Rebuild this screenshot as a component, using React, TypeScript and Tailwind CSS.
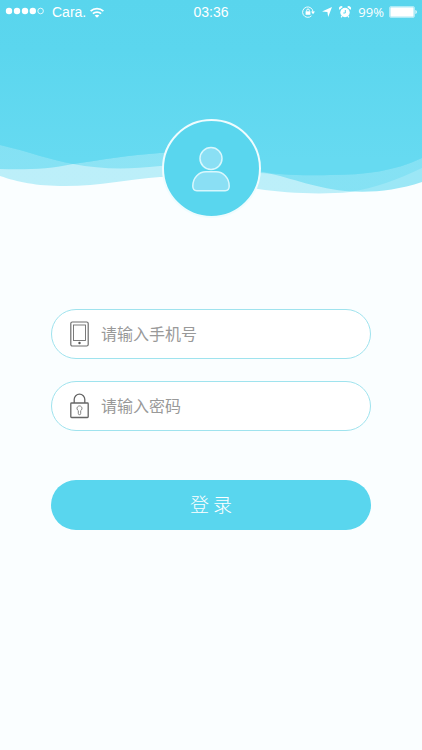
import type { ReactNode } from 'react'

interface FieldProps {
  id: string
  label: string
  type: string
  icon: ReactNode
}

const StatusBar = () => (
  <div className="relative grid h-6 grid-cols-3 items-center px-[5px] font-['Liberation_Sans',Arial,sans-serif] text-sm text-white">
    <div className="flex items-center gap-2">
      <svg viewBox="0 0 39 10" className="h-2.5 w-[39px]" fill="currentColor">
        <circle cx="4" cy="4" r="3.200" />
        <circle cx="12" cy="4" r="3.200" />
        <circle cx="20" cy="4" r="3.200" />
        <circle cx="27.800" cy="4" r="3.200" />
        <circle cx="35.600" cy="4" r="2.800" fill="none" stroke="currentColor" strokeWidth="0.800" />
      </svg>
      <span>Cara.</span>
      <svg viewBox="0 0 14 11" className="-ml-1 h-[11px] w-3.5" fill="none" stroke="currentColor" strokeWidth="1.800">
        <path d="M.6 4.200C4.200.7 9.800.7 13.400 4.200" />
        <path d="M2.900 6.700c2.300-2.200 5.900-2.200 8.200 0" />
        <path d="M7 10.800 4.700 8.600c1.300-1.200 3.300-1.200 4.600 0z" fill="currentColor" stroke="none" />
      </svg>
    </div>

    <span className="text-center">03:36</span>

    <div className="flex items-center justify-end gap-[7px]">
      {/* Rotation lock */}
      <svg viewBox="0 0 13 12" className="h-3 w-[13px]" fill="none" stroke="currentColor">
        <path d="M9.500 9.800A5.200 5.200 0 1 1 11 6" strokeWidth="0.900" />
        <path d="M9 5.600h4L11 8.200z" fill="currentColor" stroke="none" />
        <rect x="3.600" y="5.300" width="4.800" height="3.500" fill="currentColor" stroke="none" />
        <path d="M4.700 5.500V4.300a1.300 1.300 0 0 1 2.600 0v1.200" strokeWidth="1" />
      </svg>
      {/* Location */}
      <svg viewBox="0 0 10 10" className="size-2.5" fill="currentColor">
        <path d="M10 0 6.200 10 5.400 5 0 4.400z" />
      </svg>
      {/* Alarm */}
      <svg viewBox="0 0 12 12" className="size-3" fill="currentColor">
        <circle cx="6" cy="6.500" r="4.700" />
        <path d="M.5 3.800A2 2 0 0 1 3.800 1zM11.500 3.800A2 2 0 0 0 8.200 1z" />
        <path d="m3 10-.8 1.400M9 10l.8 1.400" stroke="currentColor" strokeWidth="1.200" />
        <path d="M6.300 4v3H4.300" fill="none" stroke="#5ad6ed" strokeWidth="1" />
      </svg>
      <span className="font-['Open_Sans',sans-serif] text-[13px]">99%</span>
      {/* Battery */}
      <svg viewBox="0 0 28 12" className="-ml-0.5 h-3 w-7" fill="currentColor">
        <rect x="0.500" y="0.500" width="25" height="11" rx="1.500" fill="none" stroke="currentColor" strokeOpacity="0.500" />
        <rect x="1.300" y="1.300" width="23.400" height="9.400" rx="0.500" />
        <path d="M26.500 4c1.600.6 1.600 3.400 0 4z" />
      </svg>
    </div>
  </div>
)

const Waves = () => (
  <svg viewBox="0 0 422 200" preserveAspectRatio="none" className="absolute inset-x-0 top-0 h-[200px] w-full">
    <defs>
      <linearGradient id="sky" x1="0" y1="0" x2="0" y2="200" gradientUnits="userSpaceOnUse">
        <stop offset="0" stopColor="#59d5ed" />
        <stop offset="0.250" stopColor="#5bd6ee" />
        <stop offset="0.800" stopColor="#66daf1" />
      </linearGradient>
    </defs>
    <g fill="url(#sky)">
      <path
        fillOpacity="0.420"
        d="M0 0H422V168C397 180 375 188 350 192C320 195 285 193 258 189C220 180 195 177 160 177C130 179 100 186 65 186C35 186 18 182 0 176z"
      />
      <path
        fillOpacity="0.640"
        d="M0 0H422V182C395 191 370 193 345 191C310 187 290 177 258 171C230 155 195 152 160 153C130 155 100 160 73 164C50 169 25 170 0 169z"
      />
      <path
        fillOpacity="0.550"
        d="M0 0H422V158C395 171 365 175 330 175C300 176 280 174 258 173C220 164 190 163 160 166C125 170 100 169 73 164C50 160 30 152 0 145z"
      />
      <path d="M0 0H422V158C395 171 365 175 330 175C300 176 280 175 258 171C230 155 195 152 160 153C130 155 100 160 73 164C50 160 30 152 0 145z" />
    </g>
  </svg>
)

const Avatar = () => (
  <div className="relative mx-auto mt-[95px] flex size-[99px] items-center justify-center rounded-full border-2 border-[#effcfe] bg-[#59d6ee]">
    <svg viewBox="0 0 40 46" className="h-[46px] w-10" fill="#8adff4" stroke="#d8f7fd" strokeWidth="1.500">
      <circle cx="20" cy="12.500" r="11" />
      <path d="M15 25.700h10c7.500 0 13.200 6.500 13.200 14.300 0 3-1.400 4.700-4 4.700H5.800c-2.600 0-4-1.700-4-4.700C1.800 32.200 7.500 25.700 15 25.700z" />
    </svg>
  </div>
)

const PhoneIcon = () => (
  <svg viewBox="0 0 19 26" className="h-[26px] w-[19px]" fill="none" stroke="#6e6e6e">
    <rect x="0.800" y="1" width="17.400" height="24" rx="1.500" strokeWidth="1.200" />
    <rect x="3.500" y="4" width="12" height="15.500" strokeWidth="0.900" />
    <circle cx="9.500" cy="22" r="1.200" fill="#555" stroke="none" />
  </svg>
)

const LockIcon = () => (
  <svg viewBox="0 0 19 26" className="h-[26px] w-[19px]" fill="none" stroke="#666">
    <rect x="0.800" y="10" width="17.400" height="14.500" rx="0.800" strokeWidth="1.300" />
    <path d="M4.200 10V6.500a5.300 5.300 0 0 1 10.600 0V10" strokeWidth="1.300" />
    <path d="M8.300 17.600a2.500 2.500 0 1 1 2.400 0V20.500a1.200 1.200 0 0 1-2.400 0z" strokeWidth="0.800" />
  </svg>
)

const Field = ({ id, label, type, icon }: FieldProps) => (
  <label
    htmlFor={id}
    className="flex h-[50px] items-center gap-3 rounded-full border border-[#9fe3ee] bg-white px-[18px]"
  >
    {icon}
    <input
      id={id}
      type={type}
      aria-label={label}
      placeholder={label}
      className="min-w-0 flex-1 bg-transparent pb-0.5 text-base text-gray-600 outline-none placeholder:text-[#999]"
    />
  </label>
)

export default function App() {
  return (
    <div className="min-h-screen bg-[#fafeff] font-['Noto_Sans_CJK_SC',sans-serif]">
      <header className="relative">
        <Waves />
        <StatusBar />
        <Avatar />
      </header>

      <form className="mx-[51px] mt-[91px] flex flex-col">
        <div className="flex flex-col gap-[22px]">
          <Field id="phone" label="请输入手机号" type="tel" icon={<PhoneIcon />} />
          <Field id="password" label="请输入密码" type="password" icon={<LockIcon />} />
        </div>
        <button
          type="button"
          className="mt-[49px] h-[50px] rounded-full bg-[#59d6ee] pb-0.5 text-[19px] font-light text-white"
        >
          登 录
        </button>
      </form>
    </div>
  )
}
